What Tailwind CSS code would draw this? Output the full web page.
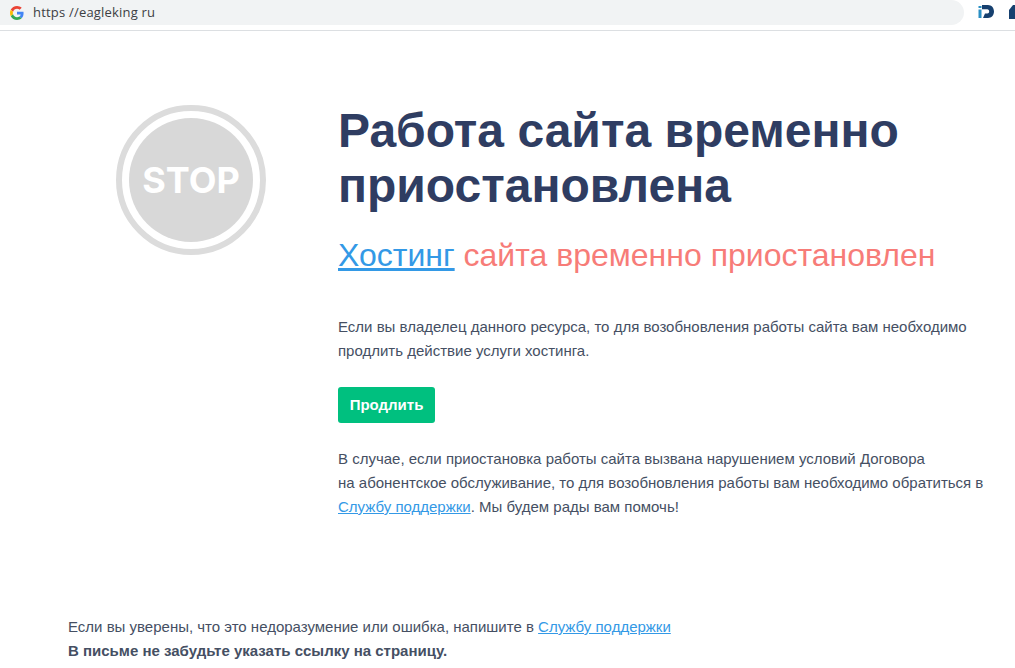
<!doctype html>
<html lang="en">
<head>
    <meta charset="UTF-8">
    <script src="https://cdn.jsdelivr.net/npm/@tailwindcss/browser@4"></script>
    <title>eagleking</title>
</head>
<body class="bg-white font-['Liberation_Sans',sans-serif] overflow-hidden">
<div class="h-[668px] w-[1015px] flex flex-col overflow-hidden">
    <!-- browser bar -->
    <div class="h-[31px] shrink-0 border-b border-[#dcdfe2] flex items-start">
        <div class="w-[964px] h-[25px] bg-[#f1f3f4] rounded-r-[13px] flex items-center pl-[10px] gap-[9px]">
            <svg class="w-[14px] h-[14px]" viewBox="0 0 48 48">
                <path fill="#EA4335" d="M24 9.5c3.5 0 6.7 1.2 9.2 3.6l6.9-6.9C35.9 2.4 30.5 0 24 0 14.6 0 6.5 5.4 2.6 13.2l8 6.2C12.500 13.700 17.800 9.500 24 9.500z"/>
                <path fill="#4285F4" d="M46.500 24.500c0-1.600-.1-3.100-.4-4.500H24v9h12.700c-.6 2.900-2.200 5.400-4.700 7.100l7.700 6c4.500-4.200 6.800-10.300 6.800-17.600z"/>
                <path fill="#FBBC05" d="M10.500 28.600c-.5-1.400-.8-3-.8-4.600s.3-3.200.8-4.600l-8-6.200C.9 16.500 0 20.100 0 24s.9 7.500 2.600 10.800l7.900-6.200z"/>
                <path fill="#34A853" d="M24 48c6.500 0 11.900-2.100 15.900-5.900l-7.700-6c-2.200 1.500-5 2.300-8.200 2.300-6.200 0-11.500-4.200-13.400-9.800l-8 6.200C6.500 42.600 14.600 48 24 48z"/>
            </svg>
            <span class="font-['Open_Sans',sans-serif] text-[13px] text-[#3c4043] tracking-[0.2px]">https //eagleking ru</span>
        </div>
        <div class="ml-[14px] mt-[4px] flex items-start gap-[15px]">
            <svg class="w-[16px] h-[16px]" viewBox="0 0 16 16">
                <rect x="0.500" y="2" width="3" height="2" fill="#2a8fc4"/>
                <rect x="0.500" y="5.500" width="3" height="8.500" fill="#2a8fc4"/>
                <path fill="#16406f" d="M4 1h6c3.500 0 6 2.800 6 6.500S13.500 14 10 14H5l2-4.500h2.300c1.100 0 1.900-.8 1.900-2S10.400 5.300 9.300 5.300H4z"/>
            </svg>
            <svg class="w-[6px] h-[16px]" viewBox="0 0 6 16">
                <path fill="#16406f" d="M0 15V6L4 1h2v14z"/>
            </svg>
        </div>
    </div>

    <div class="flex flex-1">
        <!-- stop sign -->
        <div class="w-[338px] shrink-0 pt-[74px] pl-[116px]">
            <svg class="w-[150px] h-[150px]" viewBox="0 0 150 150">
                <circle cx="75" cy="75" r="72" fill="none" stroke="#dcdcdc" stroke-width="6"/>
                <circle cx="75" cy="75" r="62" fill="#d8d8d8"/>
                <text x="75" y="88" text-anchor="middle" fill="#fff" font-family="Inter, sans-serif" font-weight="700" font-size="36">STOP</text>
            </svg>
        </div>
        <div class="flex-1 pt-[72px]">
            <h1 class="text-[48px] leading-[55px] font-bold text-[#2f3d62]">Работа сайта временно приостановлена</h1>
            <p class="mt-[22px] text-[32px] leading-[40px] text-[#f77c78]"><a class="text-[#3399e6] underline">Хостинг</a> сайта временно приостановлен</p>
            <p class="mt-[40px] text-[15px] leading-[24px] text-[#454f63]">Если вы владелец данного ресурса, то для возобновления работы сайта вам необходимо<br>продлить действие услуги хостинга.</p>
            <button class="mt-[24px] h-[36px] w-[97px] rounded-[3px] bg-[#00c07f] text-white text-[15px] font-bold block">Продлить</button>
            <p class="mt-[24px] text-[15px] leading-[24px] text-[#454f63]">В случае, если приостановка работы сайта вызвана нарушением условий Договора<br>на абонентское обслуживание, то для возобновления работы вам необходимо обратиться в<br><a class="text-[#3399e6] underline">Службу поддержки</a>. Мы будем рады вам помочь!</p>
        </div>
    </div>

    <div class="pl-[68px] pb-[5px] text-[15px] leading-[24px] text-[#454f63]">
        <p>Если вы уверены, что это недоразумение или ошибка, напишите в <a class="text-[#3399e6] underline">Службу поддержки</a></p>
        <p class="font-bold">В письме не забудьте указать ссылку на страницу.</p>
    </div>
</div>
</body>
</html>
